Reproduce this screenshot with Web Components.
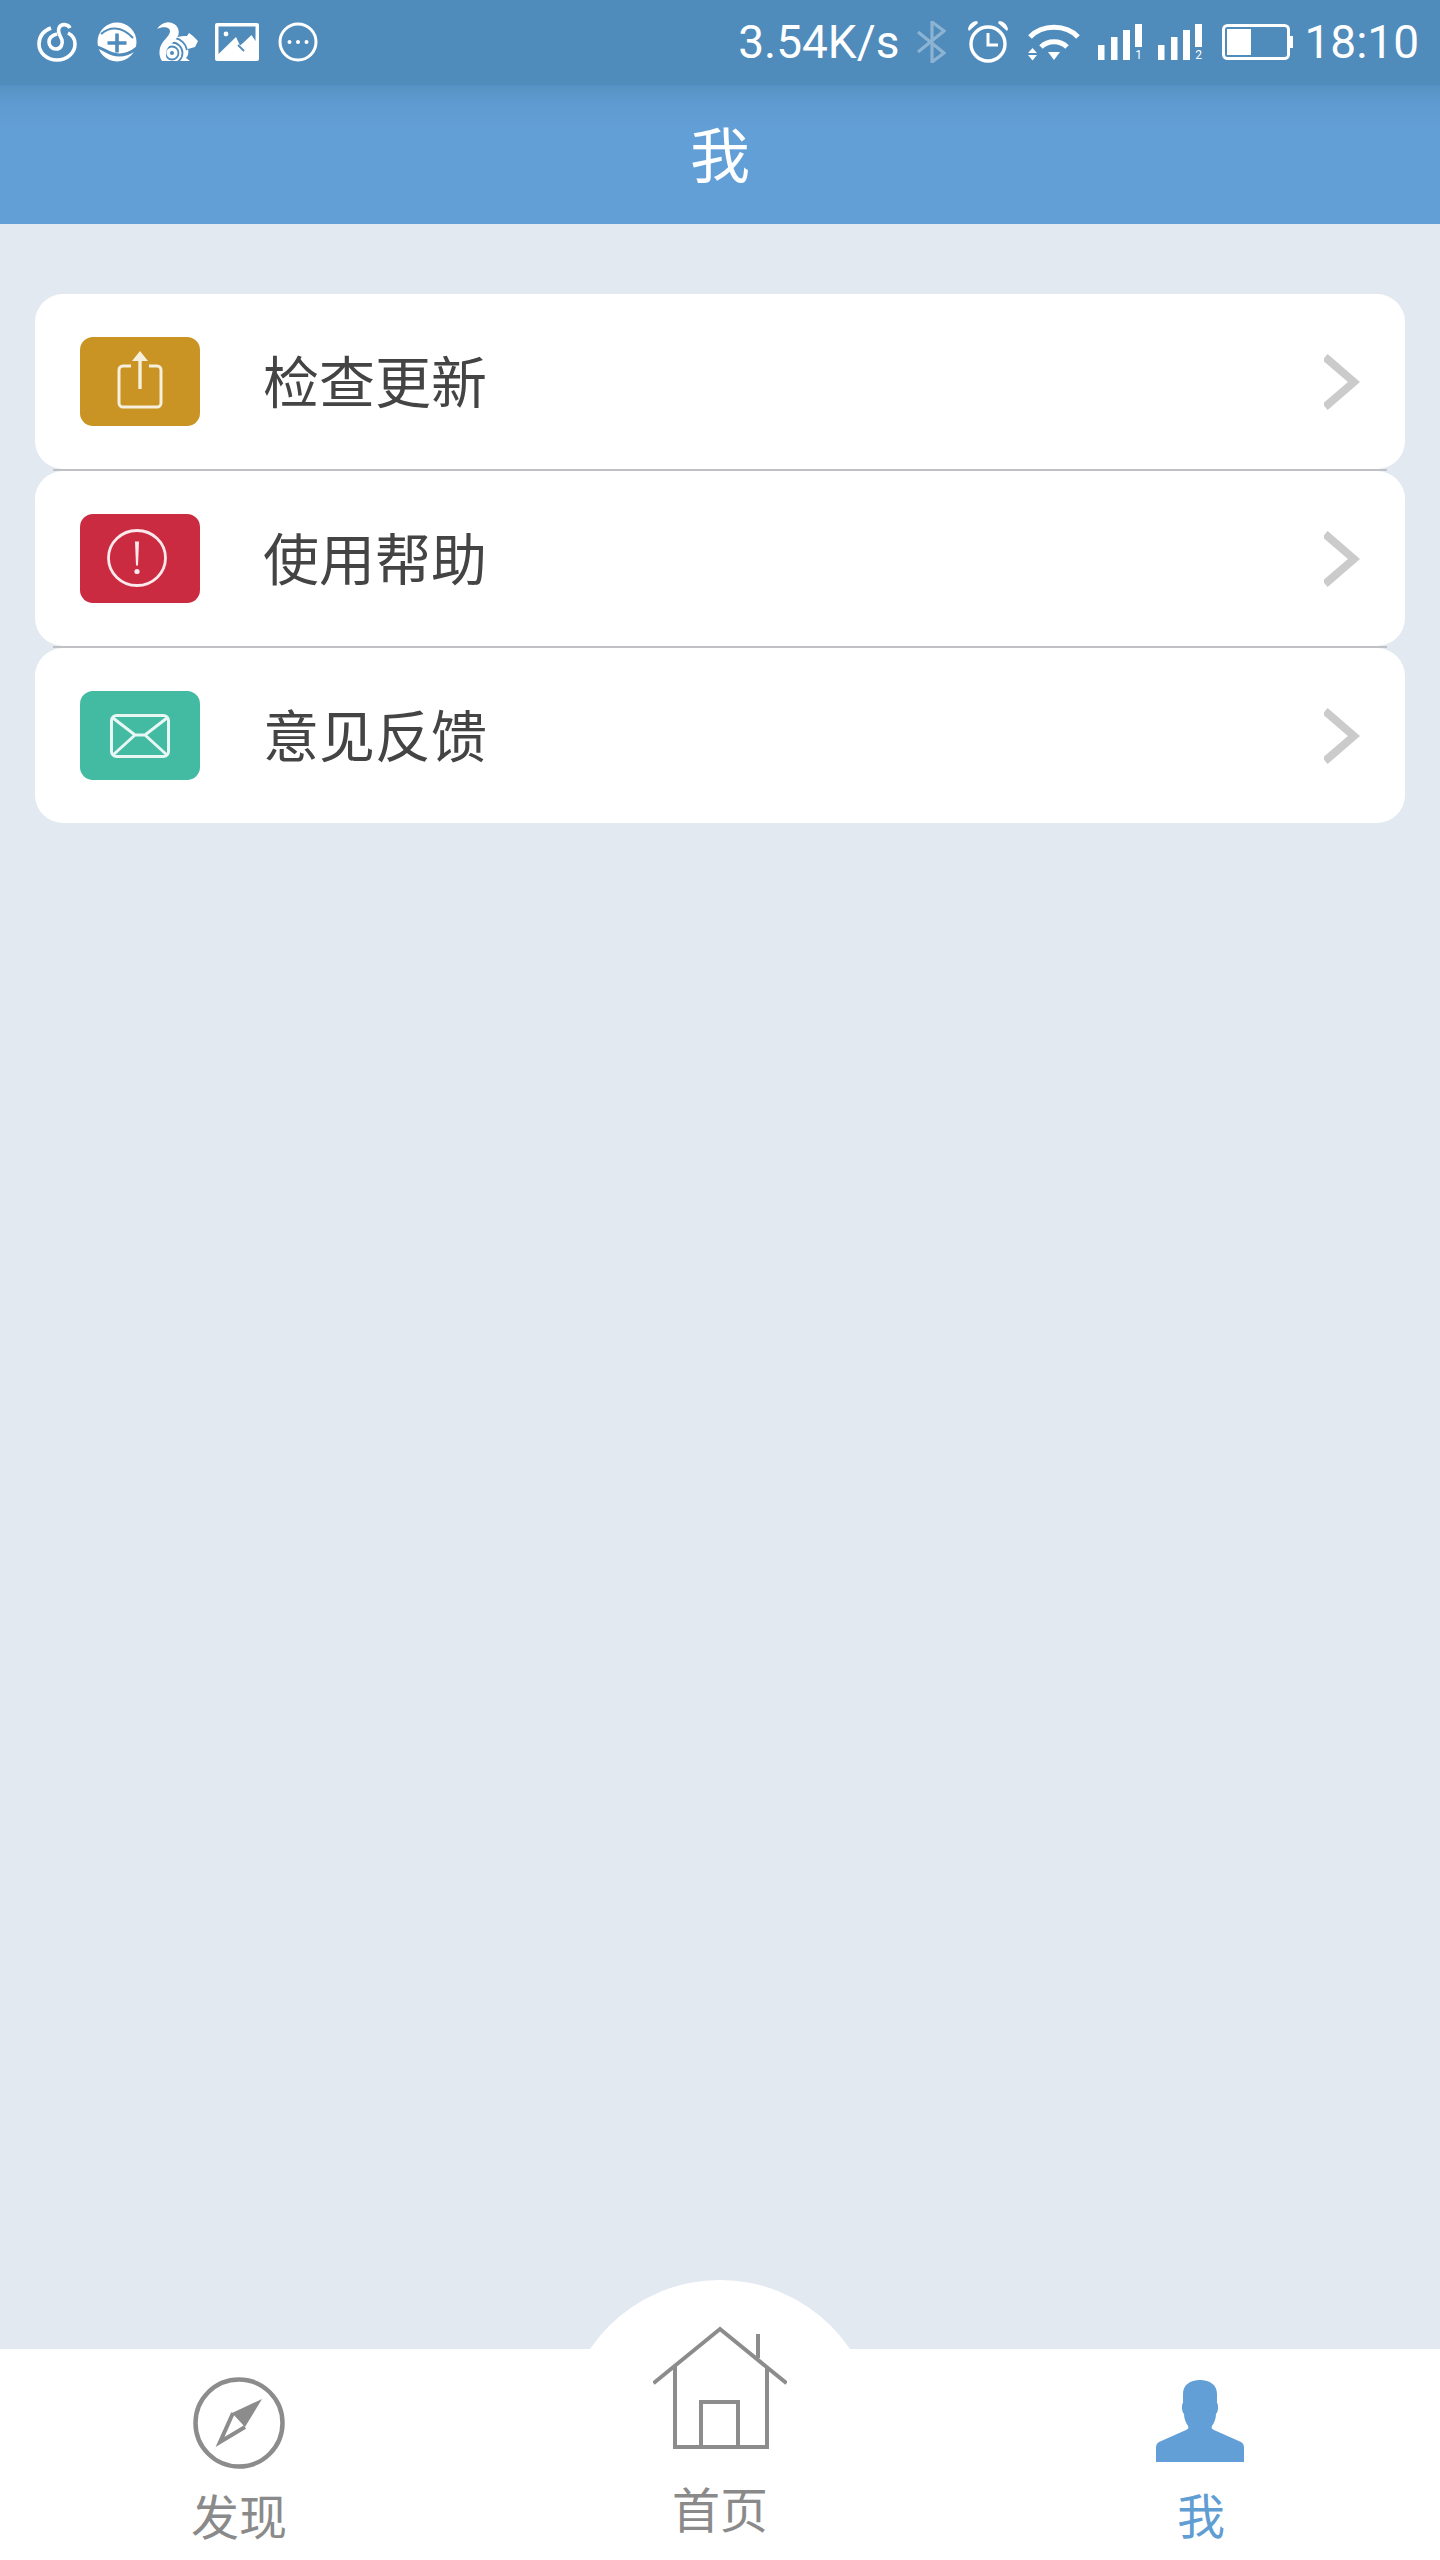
<!DOCTYPE html>
<html lang="zh">
<head>
<meta charset="utf-8">
<title>我</title>
<style>
    html, body {
        margin: 0;
        height: 2560px;
        overflow: hidden;
    }
    body {
        display: flex;
        flex-direction: column;
        background: #e3e9f1;
        font-family: Roboto, "Noto Sans CJK SC", sans-serif;
    }
</style>
</head>
<body>
<status-bar>
    <svg slot="apps" width="40" height="40" viewBox="0 0 40 40" fill="none" stroke="#fff" stroke-width="3.6">
        <path d="M14 6C6 9 2 15 2 22c0 9 8 16 18 16s18-7 18-16c0-5-3-9-7-11"/>
        <path d="M33 6c-2-4-9-5-11 0-2 4 2 9 3 12 1 4-1 9-6 9-4 0-7-3-7-7 0-5 4-7 8-8"/>
    </svg>
    <svg slot="apps" width="40" height="40" viewBox="0 0 40 40">
        <circle cx="20" cy="20" r="19.500" fill="#fff"/>
        <path d="M4 12C12 5 24 3 36 16" fill="none" stroke="#4f8bbb" stroke-width="2"/>
        <path d="M0 25c8 2 12 8 22 8 8 0 13-3 18-7" fill="none" stroke="#4f8bbb" stroke-width="3"/>
        <path d="M20 11.500v19M10.500 21h19" stroke="#4f8bbb" stroke-width="3.600"/>
    </svg>
    <svg slot="apps" width="42" height="40" viewBox="0 0 42 40">
        <path fill="#fff" d="M10 22c5-7 13-8 20-8l2-3 4 3 5 5-3 6-7 2c1 4 0 7-2 9l4 3H6z"/>
        <g fill="none" stroke="#4f8bbb">
            <circle cx="15" cy="31" r="10.500" stroke-width="1.800"/>
            <circle cx="15" cy="31" r="6.500" stroke-width="1.800"/>
            <path d="M18 16c6 1 11 6 12 12" stroke-width="1.800"/>
        </g>
        <circle cx="15" cy="31" r="2" fill="#4f8bbb"/>
        <path fill="#fff" d="M0 7C4 1 10-1 15 1c6 2 8 8 6 13-2 4-6 7-9 10-3 4-4 9-2 14l1 1H5C1 33 2 25 6 20c3-4 7-7 7-11 0-4-7-5-13-2z"/>
    </svg>
    <svg slot="apps" style="margin:0 -1px 0 -4px" width="44" height="38" viewBox="0 0 44 38">
        <rect width="44" height="38" rx="2" fill="#fff"/>
        <path fill="#4f8bbb" d="M3.500 3.500h37V18l-4-6-9 8.500-2.500 2L21 14 3.500 31z"/>
        <path stroke="#4f8bbb" stroke-width="1.800" d="M23 22l6 6"/>
        <circle cx="11" cy="11" r="2.400" fill="#fff"/>
    </svg>
    <svg slot="apps" width="40" height="40" viewBox="0 0 40 40" fill="#fff">
        <circle cx="20" cy="20" r="18" fill="none" stroke="#fff" stroke-width="3"/>
        <circle cx="11.500" cy="20" r="2"/><circle cx="20" cy="20" r="2"/><circle cx="28.500" cy="20" r="2"/>
    </svg>

    <span slot="speed">3.54K/s</span>

    <svg slot="system" style="margin-left:17px" width="30" height="42" viewBox="0 0 30 42" fill="none" stroke="#fff" stroke-opacity=".35" stroke-width="3.200">
        <path d="M2 11l26 21-12 9V1l12 9L2 31"/>
    </svg>
    <svg slot="system" style="margin-left:21px" width="42" height="42" viewBox="0 0 42 42" fill="none" stroke="#fff" stroke-width="3.400">
        <circle cx="21" cy="23" r="17"/>
        <path d="M21 12v12h10" stroke-width="3"/>
        <path fill="#fff" stroke="none" d="M1 8c1-5 5-8 9-8l1 2-9 8zM41 8c-1-5-5-8-9-8l-1 2 9 8z"/>
    </svg>
    <svg slot="system" style="margin-left:19px" width="52" height="38" viewBox="0 0 52 38" fill="none" stroke="#fff" stroke-width="5">
        <path d="M2 14C14 1 38 1 50 14"/>
        <path d="M13 24c7-7 19-7 26 0"/>
        <path fill="#fff" stroke="none" d="M20 29h12l-6 8zM0 30h9l-4.500-5zM0 32h9l-4.500 5.500z"/>
    </svg>
    <svg slot="system" style="margin:2px 0 0 18px" width="44" height="38" viewBox="0 0 44 38" fill="#fff">
        <rect x="0" y="21" width="6.500" height="15"/><rect x="13" y="13" width="6.500" height="23"/><rect x="25" y="6" width="7" height="30"/><rect x="37" y="0" width="7" height="23"/>
        <text x="40.500" y="35" font-size="12" font-family="Roboto, sans-serif" text-anchor="middle">1</text>
    </svg>
    <svg slot="system" style="margin:2px 0 0 16px" width="44" height="38" viewBox="0 0 44 38" fill="#fff">
        <rect x="0" y="21" width="6.500" height="15"/><rect x="13" y="13" width="6.500" height="23"/><rect x="25" y="6" width="7" height="30"/><rect x="37" y="0" width="7" height="23"/>
        <text x="40.500" y="35" font-size="12" font-family="Roboto, sans-serif" text-anchor="middle">2</text>
    </svg>
    <svg slot="system" style="margin-left:20px" width="71" height="36" viewBox="0 0 71 36">
        <rect x="1.500" y="1.500" width="65" height="33" rx="4" fill="none" stroke="#fff" stroke-width="3"/>
        <rect x="5" y="5" width="24" height="26" fill="#fff"/>
        <rect x="68" y="12" width="3" height="12" fill="#fff"/>
    </svg>

    <span slot="clock">18:10</span>
</status-bar>

<title-bar>我</title-bar>

<main-area>
    <menu-row color="#c99423" label="检查更新">
        <svg slot="icon" style="margin-bottom:4px" width="46" height="58" viewBox="0 0 46 58" fill="none" stroke="#f7efdd" stroke-width="3">
            <path d="M14 15H6a4 4 0 0 0-4 4v33a4 4 0 0 0 4 4h34a4 4 0 0 0 4-4V19a4 4 0 0 0-4-4h-8"/>
            <path d="M23 38V4" stroke-width="3.400"/>
            <path fill="#f7efdd" stroke="none" d="M23 0l8 10H15z"/>
        </svg>
    </menu-row>
    <menu-row color="#cb2b41" label="使用帮助">
        <svg slot="icon" style="margin:0 6px 2px 0" width="60" height="58" viewBox="0 0 60 58" fill="none" stroke="#fbe9ec" stroke-width="2.800">
            <ellipse cx="30" cy="29" rx="28.500" ry="27.500"/>
            <path d="M28 12.500h4l-1 24h-2z" fill="#fbe9ec" stroke="none"/>
            <circle cx="30" cy="42.500" r="2.600" fill="#fbe9ec" stroke="none"/>
        </svg>
    </menu-row>
    <menu-row color="#43bba3" label="意见反馈" last>
        <svg slot="icon" width="60" height="44" viewBox="0 0 60 44" fill="none" stroke="#e8f7f4" stroke-width="3">
            <rect x="1.500" y="1.500" width="57" height="41" rx="5"/>
            <path d="M3 4l22 17h10L57 4M3 41l22-20M57 41L35 21"/>
        </svg>
    </menu-row>
</main-area>

<tab-bar>
    <tab-item label="发现" top="28" gap="21">
        <svg slot="icon" width="92" height="92" viewBox="0 0 92 92" fill="none" stroke="#8c8c8c" stroke-width="4.500">
            <circle cx="46" cy="46" r="43.500"/>
            <path fill="#8c8c8c" stroke="none" d="M69 22L39 36l13 14z"/>
            <path stroke-width="4" d="M40 36L27 65l25-15"/>
        </svg>
    </tab-item>
    <tab-item label="首页" top="-23" gap="33">
        <svg slot="icon" width="134" height="124" viewBox="0 0 134 124" fill="none" stroke="#8c8c8c" stroke-width="4">
            <path d="M2 56L67 3l65 53" stroke-linecap="square"/>
            <path d="M22 41V121H114V41"/>
            <path d="M48 121V76H85V121"/>
            <path d="M105 8V32"/>
        </svg>
    </tab-item>
    <tab-item label="我" active top="31" gap="27">
        <svg slot="icon" style="margin-right:2px" width="88" height="82" viewBox="0 0 88 82" fill="#629fd6">
            <path d="M0 82V68c0-3 1-5 3-6l27-12c2-1 3-2 2-4-2-3-4-7-4-12-1-1-2-3-2-6 0-3 0-4 1-5v-9C27 5 34 0 44 0s17 5 17 14v9c1 1 1 2 1 5 0 3-1 5-2 6 0 5-2 9-4 12-1 2 0 3 2 4l27 12c2 1 3 3 3 6v14z"/>
        </svg>
    </tab-item>
</tab-bar>

<script>
class StatusBar extends HTMLElement {
    constructor() {
        super();
        this.attachShadow({mode: 'open'});
    }

    connectedCallback() {
        this.shadowRoot.innerHTML = `
            <style>
                :host {
                    display: flex;
                    flex: none;
                    align-items: center;
                    height: 85px;
                    box-sizing: border-box;
                    padding: 0 21px 2px 37px;
                    background: #4f8bbb;
                    color: #fff;
                    font: 400 46px Roboto, sans-serif;
                }
                .apps { display: flex; align-items: center; gap: 20px; }
                .right { display: flex; align-items: center; margin-left: auto; }
                .system { display: flex; align-items: center; }
                .clock { margin-left: 11px; }
                ::slotted(svg) { display: block; }
            </style>
            <div class="apps"><slot name="apps"></slot></div>
            <div class="right">
                <slot name="speed"></slot>
                <div class="system"><slot name="system"></slot></div>
                <div class="clock"><slot name="clock"></slot></div>
            </div>
        `;
    }
}

class TitleBar extends HTMLElement {
    constructor() {
        super();
        this.attachShadow({mode: 'open'});
    }

    connectedCallback() {
        this.shadowRoot.innerHTML = `
            <style>
                :host {
                    display: flex;
                    flex: none;
                    align-items: center;
                    justify-content: center;
                    height: 139px;
                    box-sizing: border-box;
                    padding-bottom: 6px;
                    background: linear-gradient(#5792c4, #5f9bd0 18px, #629fd6 45px);
                    color: #fff;
                    font: 400 60px "Noto Sans CJK SC", sans-serif;
                }
            </style>
            <slot></slot>
        `;
    }
}

class MainArea extends HTMLElement {
    constructor() {
        super();
        this.attachShadow({mode: 'open'});
    }

    connectedCallback() {
        this.shadowRoot.innerHTML = `
            <style>
                :host {
                    display: block;
                    flex: 1;
                    padding: 70px 35px 0;
                }
            </style>
            <slot></slot>
        `;
    }
}

class MenuRow extends HTMLElement {
    constructor() {
        super();
        this.attachShadow({mode: 'open'});
    }

    connectedCallback() {
        const color = this.getAttribute('color') || '#999';
        const label = this.getAttribute('label') || '';
        const rule = this.hasAttribute('last') ? '' : '<div class="rule"></div>';
        this.shadowRoot.innerHTML = `
            <style>
                :host {
                    display: block;
                }
                .row {
                    display: flex;
                    align-items: center;
                    height: 175px;
                    padding: 0 45px;
                    background: #fff;
                    border-radius: 28px;
                }
                .badge {
                    display: flex;
                    flex: none;
                    align-items: center;
                    justify-content: center;
                    width: 120px;
                    height: 89px;
                    background: ${color};
                    border-radius: 13px;
                }
                .label {
                    flex: 1;
                    margin: 0 0 6px 63px;
                    color: #444;
                    font: 400 56px "Noto Sans CJK SC", sans-serif;
                }
                .arrow { flex: none; }
                .rule {
                    height: 2px;
                    margin: 0 18px;
                    background: #bfc1c4;
                }
                ::slotted(svg) { display: block; }
            </style>
            <div class="row">
                <div class="badge"><slot name="icon"></slot></div>
                <div class="label">${label}</div>
                <svg class="arrow" width="36" height="56" viewBox="0 0 36 56" fill="none" stroke="#cbcbcb" stroke-width="8">
                    <path d="M1 3l29 25L1 53"/>
                </svg>
            </div>
            ${rule}
        `;
    }
}

class TabBar extends HTMLElement {
    constructor() {
        super();
        this.attachShadow({mode: 'open'});
    }

    connectedCallback() {
        this.shadowRoot.innerHTML = `
            <style>
                :host {
                    display: grid;
                    flex: none;
                    grid-template-columns: 478px 484px 478px;
                    height: 211px;
                    position: relative;
                    background: #fff;
                }
                .bump {
                    position: absolute;
                    left: 563px;
                    top: -69px;
                    width: 314px;
                    height: 157px;
                    border-radius: 157px 157px 0 0;
                    background: #fff;
                }
            </style>
            <div class="bump"></div>
            <slot></slot>
        `;
    }
}

class TabItem extends HTMLElement {
    constructor() {
        super();
        this.attachShadow({mode: 'open'});
    }

    connectedCallback() {
        const label = this.getAttribute('label') || '';
        const color = this.hasAttribute('active') ? '#5f9dd3' : '#8a8a8a';
        this.shadowRoot.innerHTML = `
            <style>
                :host {
                    display: flex;
                    flex-direction: column;
                    align-items: center;
                    position: relative;
                    color: ${color};
                    font: 400 48px/48px "Noto Sans CJK SC", sans-serif;
                }
                .icon { margin-top: ${this.getAttribute('top') || 0}px; }
                .label { margin-top: ${this.getAttribute('gap') || 0}px; }
                ::slotted(svg) { display: block; }
            </style>
            <div class="icon"><slot name="icon"></slot></div>
            <div class="label">${label}</div>
        `;
    }
}

window.customElements.define('status-bar', StatusBar);
window.customElements.define('title-bar', TitleBar);
window.customElements.define('main-area', MainArea);
window.customElements.define('menu-row', MenuRow);
window.customElements.define('tab-bar', TabBar);
window.customElements.define('tab-item', TabItem);
</script>
</body>
</html>
